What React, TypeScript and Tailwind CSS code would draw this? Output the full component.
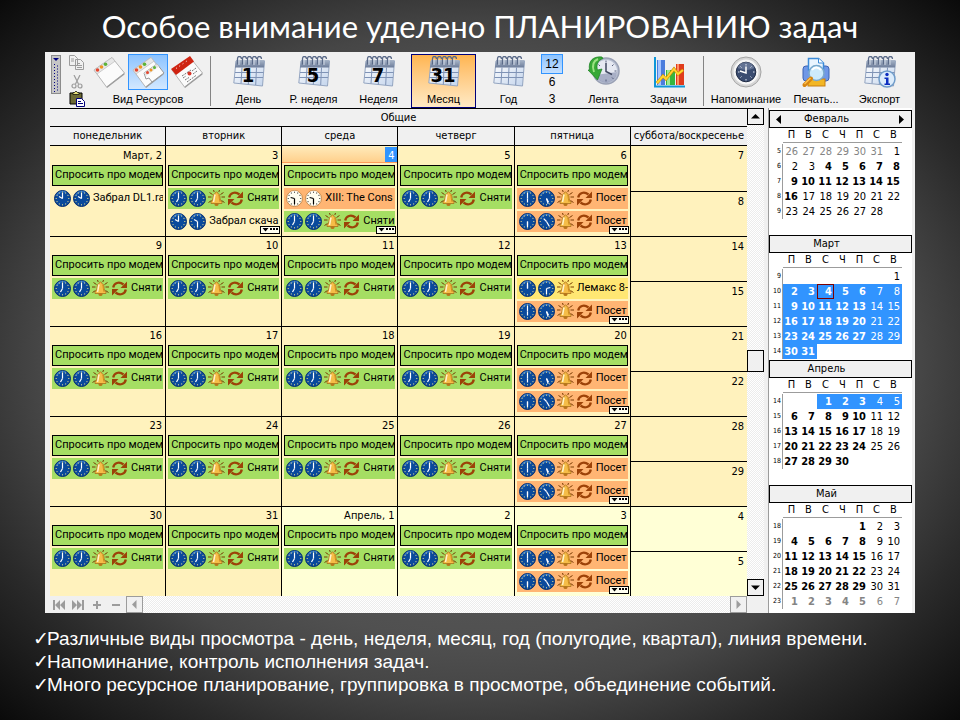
import React from "react";

const ui = "font-['DejaVu_Sans_Condensed','DejaVu_Sans',sans-serif]";
const hatch = "bg-[repeating-conic-gradient(#ffffff_0_25%,#ececec_0_50%)] bg-[length:2px_2px]";

/* ---------- small drawings ---------- */

function Clock({ h, m, light = false }: { h: number; m: number; light?: boolean }) {
  const hand = (deg: number, len: number) => {
    const a = (deg * Math.PI) / 180;
    return { x2: 8.5 + len * Math.sin(a), y2: 8.5 - len * Math.cos(a) };
  };
  const face = light ? "#fffdf0" : "#0a4a9c";
  const ink = light ? "#000" : "#fff";
  return (
    <svg className="size-[17px] shrink-0" viewBox="0 0 17 17" aria-hidden="true">
      <circle cx="8.5" cy="8.5" r="8" fill={face} stroke={light ? "#c98a4a" : "#062f70"} />
      <path d="M3 5a6.500 6.500 0 0 1 9-2.500" fill="none" stroke={light ? "#fff" : "#3f86d8"} strokeWidth="1.500" opacity="0.700" />
      {Array.from({ length: 12 }, (_, i) => {
        const p = hand(i * 30, 6.3);
        return <rect key={i} x={p.x2 - 0.5} y={p.y2 - 0.5} width="1" height="1" fill={light ? "#222" : "#f2e38a"} />;
      })}
      <line x1="8.5" y1="8.5" {...hand(m * 6, 5.5)} stroke={ink} strokeWidth="1.2" />
      <line x1="8.5" y1="8.5" {...hand(h * 30, 4)} stroke={ink} strokeWidth="1.2" />
    </svg>
  );
}

function Bell() {
  return (
    <svg className="size-[17px] shrink-0" viewBox="0 0 17 17" aria-hidden="true">
      <path d="M1.500 2.500l3 2M15.500 2.500l-3 2M0 7h3.500M13.500 7H17M.5 12.500l3-2M16.500 12.500l-3-2M5.500 0l.7 2M11.500 0l-.7 2" stroke="#7a3c04" />
      <path d="M8.500 2c.9 0 1.200.6 1.200 1.300 1.600.6 2.200 2 2.300 4 .1 2.300.6 3.500 2 4.700v1.500H3V12c1.400-1.200 1.900-2.400 2-4.700.1-2 .7-3.400 2.300-4 0-.7.3-1.300 1.200-1.300z" fill="#f5bd48" stroke="#a8701c" strokeWidth=".8" />
      <path d="M7.200 4.500C6.200 6 6.500 9 5.500 12" fill="none" stroke="#fff3cc" strokeWidth="1.500" />
      <path d="M10.800 5c.6 2 .3 4.500 1.400 7" fill="none" stroke="#d08c1c" />
      <ellipse cx="8.500" cy="14.500" rx="2" ry="1.500" fill="#b8761a" />
    </svg>
  );
}

function Recur() {
  return (
    <svg className="size-[17px] shrink-0" viewBox="0 0 17 17" aria-hidden="true">
      <path d="M2.200 7.500C3 3 8 1 12.500 4.500M14.800 9.500c-.8 4.500-6 6.500-10.300 3" fill="none" stroke="#9c4208" strokeWidth="2.300" />
      <path d="M16 1.500V8H9.500zM1 15.500V9h6.500z" fill="#9c4208" />
    </svg>
  );
}

function MoreBadge() {
  return (
    <button aria-label="Ещё события" className="absolute right-px bottom-[2px] block h-[8px] w-[20px]">
      <svg className="block h-full w-full" viewBox="0 0 20 8">
        <rect x=".5" y=".5" width="19" height="7" fill="#fffff0" stroke="#000" />
        <path d="M2.500 2h6l-3 3.500zM10 2h2v2h-2zM13 2h2v2h-2zM16 2h2v2h-2z" fill="#000" />
      </svg>
    </button>
  );
}

function CalIcon({ n }: { n?: string }) {
  return (
    <svg className="size-8" viewBox="0 0 32 32" aria-hidden="true">
      <defs>
        <linearGradient id="calBody" x1="0" y1="0" x2="1" y2="1">
          <stop offset="0" stopColor="#ffffff" />
          <stop offset="1" stopColor="#c3d4ec" />
        </linearGradient>
        <linearGradient id="calTop" x1="0" y1="0" x2="0" y2="1">
          <stop offset="0" stopColor="#a9b6c9" />
          <stop offset="1" stopColor="#6d7d9a" />
        </linearGradient>
      </defs>
      <path d="M3 5h28.500L29.500 30 .8 27z" fill="url(#calBody)" stroke="#94a5c0" />
      <path d="M3 4h28.500l-.5 7.500H2z" fill="url(#calTop)" />
      <path d="M2 16.500h28.500M1.500 21.500h28.500M9 11.500L8 27.500M16 11.500l-.7 17M23.500 11.500l-.8 17.500" stroke="#7f93b6" fill="none" />
      {[4.5, 9.5, 14.5, 19.5, 24.5].map((x) => (
        <g key={x}>
          <path d={`M${x} 8.500V3q0-2.500 2-2.500t2 2.500`} fill="none" stroke="#5a6a88" strokeWidth="1.300" />
          <path d={`M${x + 1.5} 9V3`} stroke="#d2dae6" />
        </g>
      ))}
      {n && (
        <text x="15" y="26" textAnchor="middle" fontFamily="DejaVu Sans Condensed, DejaVu Sans, sans-serif" fontWeight="700" fontSize="20" fill="#000">
          {n}
        </text>
      )}
    </svg>
  );
}

function Sheet({ kind }: { kind: "plain" | "double" | "red" }) {
  return (
    <svg className="h-8 w-[34px]" viewBox="0 0 34 32" aria-hidden="true">
      <path d="M2 14L20 1.500 32.500 17 14.500 31z" fill="#fbfbfb" stroke="#b5b5b5" />
      <path d="M14.500 31L32.500 17v1.500L15 32z" fill="#999" />
      {kind === "red" ? (
        <>
          <path d="M1 13L20 0l4 5.500L6 19z" fill="#cf2412" />
          <path d="M6 12.500L19 3.500" stroke="#fff" strokeDasharray="1 3" />
          <path d="M12 20l9-6M13 22l3-2M22 15l4-3M15 24l4-2.500M23 18l4-3M17 26l9-6.500" stroke="#777" strokeDasharray="2 1" />
          <circle cx="19.500" cy="17.500" r="2" fill="#d9372a" />
        </>
      ) : (
        <>
          <path d="M2 14L20 1.500l3 3.700L5 18z" fill="#e7e7e7" stroke="#bbb" strokeWidth=".7" />
          <circle cx="5.500" cy="14" r="1.800" fill="#e4472f" />
          <circle cx="9.500" cy="11" r="1.800" fill="#ee9424" />
          <circle cx="13.500" cy="8.200" r="1.800" fill="#5cb338" />
        </>
      )}
      {kind === "double" && (
        <>
          <path d="M13 17L26 8l7 9-12 9-3-4-3 1z" fill="#fcfcfc" stroke="#999" />
          <path d="M13 17L26 8l2 2.500L15 20z" fill="#e3e3e3" />
          <circle cx="16.500" cy="16.500" r="1.500" fill="#e4472f" />
          <circle cx="20" cy="14" r="1.500" fill="#ee9424" />
          <circle cx="23.500" cy="11.500" r="1.500" fill="#5cb338" />
        </>
      )}
    </svg>
  );
}

const LineIcon = () => (
  <svg className="size-8" viewBox="0 0 32 32" aria-hidden="true">
    <circle cx="18" cy="15" r="13" fill="#b9c0d2" stroke="#9aa1b5" strokeWidth="1.500" />
    <circle cx="18" cy="15" r="11" fill="#e6e9f2" />
    <path d="M7.500 19A11 11 0 0 0 29 16z" fill="#8d95b3" opacity=".7" />
    <path d="M18 4.500v2M18 23.500v2M26.500 15h2M10.500 8.500l1.500 1.500M25.500 8.500L24 10M24 21.500l1.500 1.500" stroke="#555e7c" />
    <path d="M18 7v8.500l6 3" stroke="#404860" strokeWidth="1.500" fill="none" />
    <path d="M14 1C5 0 0 5 1.500 14l-1.500 0 9.500 10L14 13l-4.500 1C8 9 10 4 15 2.500z" fill="#37a936" stroke="#1d8024" strokeWidth=".7" />
    <path d="M10 3c-5 2-6 7-4 13" stroke="#9be182" strokeWidth="2" fill="none" />
  </svg>
);

const ChartIcon = () => (
  <svg className="size-8" viewBox="0 0 32 32" aria-hidden="true">
    <rect x="4" y="4" width="8" height="25" fill="#4c7ddd" />
    <rect x="5" y="4" width="3" height="25" fill="#a5c4ff" />
    <rect x="13" y="14" width="9" height="15" fill="#37b53c" />
    <rect x="14" y="14" width="3" height="15" fill="#9ee98f" />
    <rect x="23" y="8" width="8" height="21" fill="#e03c1c" />
    <rect x="24" y="8" width="2" height="21" fill="#ff8e62" />
    <path d="M2 1v29.500h30" stroke="#0d96d8" strokeWidth="2" fill="none" />
    <path d="M4 27l6-7 3 3 8-10 4 5 5-4" stroke="#c98500" strokeWidth="3" fill="none" />
    <path d="M4 27l6-7 3 3 8-10 4 5 5-4" stroke="#ffd530" strokeWidth="2" fill="none" />
  </svg>
);

const RemindIcon = () => (
  <svg className="size-8" viewBox="0 0 32 32" aria-hidden="true">
    <circle cx="16" cy="16" r="15" fill="#d6d6d6" stroke="#a5a5a5" />
    <circle cx="16" cy="16" r="12.500" fill="#f6f6f6" />
    <circle cx="16" cy="16" r="9.800" fill="#3a4c70" stroke="#1f2b45" />
    <path d="M7.500 12a9 9 0 0 1 17 0q-8 4-17 0z" fill="#7d8caa" opacity=".6" />
    <path d="M16 8v1.500M16 23v1.500M8 16h1.500M23 16h1.500M10.500 10.500l1 1M21.500 10.500l-1 1M10.500 21.500l1-1M21.500 21.500l-1-1" stroke="#dfe6f2" />
    <path d="M10 15l6 2V10.500" stroke="#fff" strokeWidth="1.500" fill="none" />
  </svg>
);

const PrintIcon = () => (
  <svg className="size-8" viewBox="0 0 32 32" aria-hidden="true">
    <rect x="3" y="10" width="26" height="15" rx="3" fill="#6f97e6" stroke="#3d63b4" />
    <path d="M8.500 14V2.500h10l5 4.500v7z" fill="#eaf5ff" stroke="#3b8ad8" strokeWidth="1.500" />
    <path d="M18.500 2.500V7h5" fill="#fff" stroke="#3b8ad8" />
    <rect x="8" y="23" width="17" height="7" fill="#f2b624" stroke="#c77e10" />
    <circle cx="16.500" cy="17" r="7.500" fill="#cdeafc" stroke="#7aa9cd" strokeWidth="1.500" />
    <path d="M12 14q4-5 9 0" stroke="#fff" strokeWidth="2" fill="none" />
    <path d="M11 22.500l-6.500 6.500" stroke="#d78410" strokeWidth="4" strokeLinecap="round" />
    <path d="M10.500 22l-6 6" stroke="#ffc24d" strokeWidth="1.500" />
  </svg>
);

const ExportIcon = () => (
  <span className="relative block size-8">
    <CalIcon />
    <svg className="absolute inset-0 size-8" viewBox="0 0 32 32" aria-hidden="true">
      <circle cx="23" cy="23" r="8" fill="#dcecfb" stroke="#6f9cc9" strokeWidth="1.500" />
      <circle cx="23" cy="18.500" r="1.700" fill="#0d2fc0" />
      <path d="M20.500 21.500h4v6H26V29h-5.500v-1.500H22V23h-1.500z" fill="#0d2fc0" />
    </svg>
  </span>
);

/* ---------- toolbar ---------- */

function Tool({ label, width, active = false, children }: { label: string; width: string; active?: boolean; children: React.ReactNode }) {
  return (
    <button
      className={`flex h-[54px] shrink-0 flex-col items-center border pt-px ${width} ${
        active ? "border-[#00007b] bg-linear-to-b from-[#ffb54f] to-[#ffeac4]" : "border-transparent"
      }`}
    >
      {children}
      <span className="mt-1 whitespace-nowrap text-[11px] leading-[14px]">{label}</span>
    </button>
  );
}

const Separator = () => <div className="mt-[2px] h-[50px] w-px shrink-0 bg-[#848484]" />;

function Toolbar() {
  return (
    <div className="flex h-14 items-start overflow-hidden pl-[6px] pt-[2px] font-['Liberation_Sans',Arial,sans-serif] text-black">
      <div className="mt-px h-[39px] w-[10px] shrink-0 border border-[#8c8c8c] bg-[#c6c6c6] p-px">
        <svg className="block h-full w-full" viewBox="0 0 6 35" aria-hidden="true">
          <path d="M0 1h6L3 4z" fill="#000080" />
          <path d="M1.500 7v28M4.500 8.500v26" stroke="#000080" strokeDasharray="1 2" />
        </svg>
      </div>
      <div className="ml-[7px] flex w-[17px] shrink-0 flex-col items-center">
        <button aria-label="Копировать" className="h-[17px]">
          <svg className="size-[15px]" viewBox="0 0 15 15" fill="#f0f0f0" stroke="#9c9c9c">
            <path d="M.5.500h5l3 3v7h-8zM6.500 4.500h5l3 3v7h-8z" />
            <path d="M2 4h3M2 6h3M8 8.500h3M8 10.500h5M8 12.500h5" />
          </svg>
        </button>
        <button aria-label="Вырезать" className="mt-[2px] h-[17px]">
          <svg className="size-[14px]" viewBox="0 0 14 14" fill="none" stroke="#9c9c9c" strokeWidth="1.200">
            <path d="M4 0l4.500 9M10 0L5.500 9" />
            <circle cx="4" cy="11" r="2" />
            <circle cx="10" cy="11" r="2" />
          </svg>
        </button>
        <button aria-label="Вставить" className="h-[17px]">
          <svg className="size-4" viewBox="0 0 16 16">
            <path d="M1 2h12v11H1z" fill="#6d6a35" stroke="#000" />
            <path d="M4 3.500V1.500h1.500L7 0l1.500 1.500H10v2z" fill="#e8e07a" stroke="#000" strokeWidth=".7" />
            <path d="M7.500 7.500h5l3 3v5h-8z" fill="#fff" stroke="#00007b" />
            <path d="M9 10.500h3M9 12.500h5" stroke="#00007b" />
          </svg>
        </button>
      </div>
      <div className="ml-[5px] flex w-[116px] shrink-0 flex-col items-center">
        <div className="flex h-9 items-center">
          <button aria-label="Без группировки" className="flex h-9 w-[38px] items-center justify-center">
            <Sheet kind="plain" />
          </button>
          <button aria-label="Группировать по ресурсам" className="flex h-9 w-10 items-center justify-center border border-[#3194ff] bg-linear-to-b from-[#8cc3ff] to-[#d3e8ff]">
            <Sheet kind="double" />
          </button>
          <button aria-label="Группировать по дате" className="flex h-9 w-[38px] items-center justify-center">
            <Sheet kind="red" />
          </button>
        </div>
        <span className="mt-[2px] text-[11px] leading-[14px]">Вид Ресурсов</span>
      </div>
      <div className="w-1 shrink-0" />
      <Separator />
      <div className="w-[5px] shrink-0" />
      <Tool label="День" width="w-[65px]"><CalIcon n="1" /></Tool>
      <Tool label="Р. неделя" width="w-[65px]"><CalIcon n="5" /></Tool>
      <Tool label="Неделя" width="w-[65px]"><CalIcon n="7" /></Tool>
      <Tool label="Месяц" width="w-[65px]" active><CalIcon n="31" /></Tool>
      <Tool label="Год" width="w-[65px]"><CalIcon /></Tool>
      <div className="flex w-[22px] shrink-0 flex-col text-[12px] leading-[17px]">
        <button className="h-5 border border-[#3194ff] bg-linear-to-b from-[#8cc3ff] to-[#c5e0ff]">12</button>
        <button className="h-[17px]">6</button>
        <button className="h-[17px]">3</button>
      </div>
      <div className="w-[8px] shrink-0" />
      <Tool label="Лента" width="w-[65px]"><LineIcon /></Tool>
      <Tool label="Задачи" width="w-[65px]"><ChartIcon /></Tool>
      <div className="w-[2px] shrink-0" />
      <Separator />
      <div className="w-[7px] shrink-0" />
      <Tool label="Напоминание" width="w-[70px]"><RemindIcon /></Tool>
      <Tool label="Печать..." width="w-[70px]"><PrintIcon /></Tool>
      <Tool label="Экспорт" width="w-[57px]"><ExportIcon /></Tool>
    </div>
  );
}

/* ---------- month grid ---------- */

type Ev = { tone: "box" | "green" | "orange" | "yellow" | "none"; clocks?: [number, number][]; bell?: boolean; recur?: boolean; light?: boolean; text: string };
type Day = { label: string; events: Ev[]; more?: boolean; today?: boolean; next?: boolean };

const ask: Ev = { tone: "box", text: "Спросить про модем" };
const take: Ev = { tone: "green", clocks: [[7, 0], [7, 0]], bell: true, recur: true, text: "Сняти" };
const visit1: Ev = { tone: "orange", clocks: [[6, 0], [5, 27]], bell: true, recur: true, text: "Посет" };
const visit2: Ev = { tone: "orange", clocks: [[6, 30], [10.5, 25]], bell: true, recur: true, text: "Посет" };
const usual = [ask, take];
const friday = [ask, visit1, visit2];

const weeks: { days: Day[]; sat: string; sun: string; next?: boolean }[] = [
  {
    days: [
      { label: "Март, 2", events: [ask, { tone: "none", clocks: [[10, 0], [10, 0]], text: "Забрал DL1.ra" }] },
      { label: "3", events: [ask, take, { tone: "none", clocks: [[10, 0], [10, 30]], text: "Забрал скача" }], more: true },
      { label: "4", events: [ask, { tone: "orange", light: true, clocks: [[9.5, 30], [9.5, 30]], text: "XIII: The Cons" }, take], more: true, today: true },
      { label: "5", events: usual },
      { label: "6", events: friday, more: true },
    ],
    sat: "7",
    sun: "8",
  },
  {
    days: [
      { label: "9", events: usual },
      { label: "10", events: usual },
      { label: "11", events: usual },
      { label: "12", events: usual },
      { label: "13", events: [ask, { tone: "yellow", clocks: [[12, 0], [2.5, 30]], bell: true, text: "Лемакс 8-" }, visit1], more: true },
    ],
    sat: "14",
    sun: "15",
  },
  {
    days: [
      ...["16", "17", "18", "19"].map((label) => ({ label, events: usual })),
      { label: "20", events: friday, more: true },
    ],
    sat: "21",
    sun: "22",
  },
  {
    days: [
      ...["23", "24", "25", "26"].map((label) => ({ label, events: usual })),
      { label: "27", events: friday, more: true },
    ],
    sat: "28",
    sun: "29",
  },
  {
    days: [
      { label: "30", events: usual },
      { label: "31", events: usual },
      { label: "Апрель, 1", events: usual, next: true },
      { label: "2", events: usual, next: true },
      { label: "3", events: friday, more: true, next: true },
    ],
    sat: "4",
    sun: "5",
    next: true,
  },
];

const tones = {
  box: "border border-black bg-[#a5de63]",
  green: "bg-[#a5de63]",
  orange: "bg-[#ffb573]",
  yellow: "bg-[#ffe773]",
  none: "",
};

function EventRow({ ev }: { ev: Ev }) {
  return (
    <div className={`flex h-[21px] items-center gap-[2px] overflow-hidden pl-[2px] font-['Roboto',sans-serif] ${tones[ev.tone]}`}>
      {ev.clocks?.map(([h, m], i) => <Clock key={i} h={h} m={m} light={ev.light} />)}
      {ev.bell && <Bell />}
      {ev.recur && <Recur />}
      <span className={`min-w-0 flex-1 overflow-hidden whitespace-nowrap ${ev.clocks ? "pl-px" : ""}`}>{ev.text}</span>
    </div>
  );
}

function DayCell({ day }: { day: Day }) {
  return (
    <div className="relative flex h-[89px] flex-col">
      <div className={`flex h-[16px] shrink-0 justify-end leading-[17px] ${day.today ? "border-b border-[#ff9c5a] bg-linear-to-b from-[#ffe9b8] to-[#ffd08c]" : ""}`}>
        <span className={day.today ? "bg-[#3194ff] px-[3px] text-white" : "pr-[3px]"}>{day.label}</span>
      </div>
      <div className="mt-[2px] flex flex-col gap-[2px] px-[2px]">
        {day.events.map((ev, i) => <EventRow key={i} ev={ev} />)}
      </div>
      {day.more && <MoreBadge />}
    </div>
  );
}

const march = "bg-[#fff2bd]";
const april = "bg-[#ffffd6]";

function MonthGrid() {
  return (
    <table className="w-full table-fixed border-separate border-spacing-0 border-t border-black">
      <thead>
        <tr>
          <th colSpan={6} className="h-[18px] border-b border-black p-0 font-normal leading-[17px]">Общие</th>
        </tr>
        <tr>
          {["понедельник", "вторник", "среда", "четверг", "пятница", "суббота/воскресенье"].map((d, i) => (
            <th key={d} className={`h-[19px] whitespace-nowrap border-b border-black p-0 font-normal leading-[18px] ${i < 5 ? "border-r" : ""}`}>
              {d}
            </th>
          ))}
        </tr>
      </thead>
      <tbody>
        {weeks.map((w, wi) => {
          const last = wi === weeks.length - 1;
          return (
            <React.Fragment key={wi}>
              <tr className={wi === 0 ? "h-[46px]" : "h-[45px]"}>
                {w.days.map((d) => (
                  <td key={d.label} rowSpan={2} className={`border-r border-black p-0 align-bottom ${last ? "" : "border-b"} ${d.next ? april : march}`}>
                    <DayCell day={d} />
                  </td>
                ))}
                <td className={`border-b border-black p-0 pr-[3px] pt-px text-right align-top leading-[17px] ${w.next ? april : march}`}>{w.sat}</td>
              </tr>
              <tr className={last ? "h-[44px]" : "h-[45px]"}>
                <td className={`border-black p-0 pr-[3px] pt-px text-right align-top leading-[17px] ${last ? "" : "border-b"} ${w.next ? april : march}`}>{w.sun}</td>
              </tr>
            </React.Fragment>
          );
        })}
      </tbody>
    </table>
  );
}

function Arrow({ d, label, muted = false }: { d: string; label: string; muted?: boolean }) {
  return (
    <button aria-label={label} className={`flex size-[17px] shrink-0 items-center justify-center border bg-[#f0f0f0] ${muted ? "border-[#9c9c9c]" : "border-black"}`}>
      <svg className="size-[9px]" viewBox="0 0 9 9"><path d={d} fill={muted ? "#9c9c9c" : "#000"} /></svg>
    </button>
  );
}

function NavBar() {
  const paths = [
    ["В начало", "M0 1h2v10H0zM7 1v10L2 6zM12 1v10L7 6z"],
    ["В конец", "M10 1h2v10h-2zM0 1l5 5-5 5zM5 1l5 5-5 5z"],
    ["Добавить", "M2 5h3V2h2v3h3v2H7v3H5V7H2z"],
    ["Удалить", "M2 5h8v2H2z"],
  ];
  return (
    <div className="flex h-[17px] items-center bg-[#f0f0f0]">
      {paths.map(([label, d]) => (
        <button key={label} aria-label={label} className="flex w-[19px] items-center justify-center">
          <svg className="h-3 w-[14px]" viewBox="0 0 14 12"><path d={d} fill="#9c9c9c" /></svg>
        </button>
      ))}
      <Arrow label="Влево" muted d="M6.500 0v9L2 4.500z" />
      <div className={`h-full flex-1 ${hatch}`} />
      <Arrow label="Вправо" muted d="M2.500 0v9L7 4.500z" />
    </div>
  );
}

/* ---------- date navigator ---------- */

type Mini = { name: string; first: number; count: number; weeks: number[]; lead?: number[]; trail?: boolean; bold: (n: number, col: number) => boolean; sel: (n: number) => boolean; nav?: boolean };

const minis: Mini[] = [
  { name: "Февраль", first: 6, count: 28, weeks: [5, 6, 7, 8, 9], lead: [26, 27, 28, 29, 30, 31], bold: (n) => n >= 4 && n <= 16, sel: () => false, nav: true },
  { name: "Март", first: 6, count: 31, weeks: [9, 10, 11, 12, 13, 14], bold: (n, c) => c < 5, sel: (n) => n >= 2 },
  { name: "Апрель", first: 2, count: 30, weeks: [14, 15, 16, 17, 18], bold: (n, c) => c < 5, sel: (n) => n <= 5 },
  { name: "Май", first: 4, count: 31, weeks: [18, 19, 20, 21, 22, 23], trail: true, bold: (n, c) => c < 5, sel: () => false },
];

function MiniMonth({ m }: { m: Mini }) {
  return (
    <section className="h-[125px]">
      <div className="flex h-[18px] items-center border border-black bg-[#f0f0f0] px-[6px]">
        <button aria-label="Предыдущий месяц" className="w-[6px]">
          {m.nav && <svg className="block h-[9px] w-[5px]" viewBox="0 0 5 9"><path d="M5 0v9L0 4.500z" /></svg>}
        </button>
        <h2 className="flex-1 pr-[28px] text-center leading-[16px]">{m.name}</h2>
        <button aria-label="Следующий месяц" className="w-[6px]">
          {m.nav && <svg className="block h-[9px] w-[5px]" viewBox="0 0 5 9"><path d="M0 0v9l5-4.500z" /></svg>}
        </button>
      </div>
      <table className="table-fixed border-separate border-spacing-0">
        <colgroup>
          <col className="w-[14px]" />
          {[0, 1, 2, 3, 4, 5, 6].map((c) => <col key={c} className="w-[17px]" />)}
        </colgroup>
        <thead>
          <tr>
            <td className="h-[15px] p-0" />
            {["П", "В", "С", "Ч", "П", "С", "В"].map((d, i) => (
              <th key={i} className="border-b border-[#9c9c9c] p-0 font-normal leading-[14px]">{d}</th>
            ))}
          </tr>
        </thead>
        <tbody className="before:block before:h-px">
          {m.weeks.map((wk, r) => (
            <tr key={wk}>
              <th className="h-[15px] border-r border-[#9c9c9c] p-0 pr-px text-right text-[7px] font-normal leading-[15px]">{wk}</th>
              {[0, 1, 2, 3, 4, 5, 6].map((c) => {
                let n = r * 7 + c - m.first + 1;
                let muted = false;
                let shown = true;
                if (n < 1) {
                  muted = true;
                  if (m.lead) n = m.lead[c];
                  else shown = false;
                } else if (n > m.count) {
                  muted = true;
                  if (m.trail) n -= m.count;
                  else shown = false;
                }
                const sel = shown && !muted && m.sel(n);
                const bold = muted ? Boolean(m.trail) && c < 5 : m.bold(n, c);
                const today = m.name === "Март" && n === 4 && !muted;
                return (
                  <td
                    key={c}
                    className={`h-[15px] p-0 pr-[2px] text-right leading-[15px] ${bold ? "font-bold" : ""} ${sel ? "bg-[#3194ff] text-white" : muted ? "text-[#848484]" : ""} ${today ? "outline outline-1 -outline-offset-1 outline-[#7b0000]" : ""}`}
                  >
                    {shown ? n : ""}
                  </td>
                );
              })}
            </tr>
          ))}
        </tbody>
      </table>
    </section>
  );
}

/* ---------- page ---------- */

const points = [
  "Различные виды просмотра - день, неделя, месяц, год (полугодие, квартал), линия времени.",
  "Напоминание, контроль исполнения задач.",
  "Много ресурсное планирование, группировка в просмотре, объединение событий.",
];

export default function App() {
  return (
    <main className="flex min-h-screen flex-col bg-[radial-gradient(ellipse_at_center,#666666_0%,#505050_55%,#464646_65%,#2a2a2a_80%,#0a0a0a_100%)]">
      <h1 className="flex h-[52px] items-center justify-center whitespace-nowrap font-['Lato','Noto_Sans',sans-serif] text-[31px] leading-[52px] text-white">
        Особое внимание уделено ПЛАНИРОВАНИЮ задач
      </h1>
      <div className="mx-[45px] bg-[#f0f0f0]">
        <Toolbar />
        <div className={`flex pl-[5px] text-[11px] text-black ${ui}`}>
          <div className="min-w-0 flex-1">
            <MonthGrid />
            <NavBar />
          </div>
          <div className="flex w-[17px] shrink-0 flex-col">
            <div className={`flex flex-1 flex-col ${hatch}`}>
              <Arrow label="Вверх" d="M0 6.500h9L4.500 2z" />
              <div className="flex-1" />
              <button aria-label="Полоса прокрутки" className="h-[22px] border border-black bg-[#f0f0f0]" />
              <div className="h-[207px]" />
              <Arrow label="Вниз" d="M0 2.500h9L4.500 7z" />
            </div>
            <div className="h-[17px] bg-[#f0f0f0]" />
          </div>
          <aside className="ml-1 mr-[3px] w-[144px] shrink-0 border-l border-[#9c9c9c] bg-white pt-[2px]">
            {minis.map((m) => <MiniMonth key={m.name} m={m} />)}
          </aside>
        </div>
      </div>
      <ul className="ml-[33px] mt-[14px] font-['Liberation_Sans',Arial,sans-serif] text-[19px] leading-[23px] text-white">
        {points.map((p) => (
          <li key={p} className="flex whitespace-nowrap">
            <span aria-hidden="true" className="w-[14px] shrink-0 font-['DejaVu_Sans',sans-serif]">✓</span>
            {p}
          </li>
        ))}
      </ul>
    </main>
  );
}
